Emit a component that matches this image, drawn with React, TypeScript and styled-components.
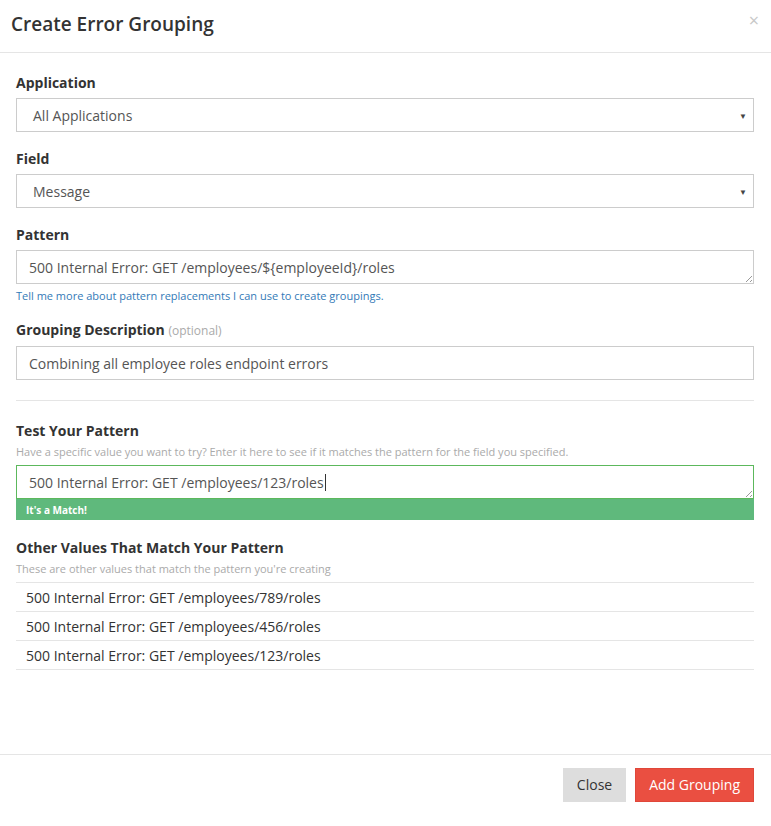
import styled, { createGlobalStyle } from 'styled-components';

const Global = createGlobalStyle`
  html, body { margin: 0; padding: 0; background: #fff; }
  body { font-family: "Open Sans", "Liberation Sans", sans-serif; color: #333; }
  * { box-sizing: border-box; }
`;

const matches = [
  '500 Internal Error: GET /employees/789/roles',
  '500 Internal Error: GET /employees/456/roles',
  '500 Internal Error: GET /employees/123/roles',
];

export default function App() {
  return (
    <>
      <Global />
      <Modal>
        <Header>
          <Title>Create Error Grouping</Title>
          <CloseX>×</CloseX>
        </Header>
        <Body>
          <Group>
            <Label>Application</Label>
            <Select>All Applications<Caret>▼</Caret></Select>
          </Group>
          <Group>
            <Label>Field</Label>
            <Select>Message<Caret>▼</Caret></Select>
          </Group>
          <Group>
            <Label>Pattern</Label>
            <TextBox>500 Internal Error: GET /employees/${'{'}employeeId{'}'}/roles<Grip /></TextBox>
            <HelpLink>Tell me more about pattern replacements I can use to create groupings.</HelpLink>
          </Group>
          <Group>
            <Label>Grouping Description <Optional>(optional)</Optional></Label>
            <Input>Combining all employee roles endpoint errors</Input>
          </Group>
          <Divider />
          <Group $tight>
            <Label>Test Your Pattern</Label>
            <Hint>Have a specific value you want to try? Enter it here to see if it matches the pattern for the field you specified.</Hint>
            <TextBox $success>500 Internal Error: GET /employees/123/roles<Cursor /><Grip /></TextBox>
            <MatchBar>It's a Match!</MatchBar>
          </Group>
          <Group $tight>
            <Label>Other Values That Match Your Pattern</Label>
            <Hint>These are other values that match the pattern you're creating</Hint>
            <List>
              {matches.map((m) => <Row key={m}>{m}</Row>)}
            </List>
          </Group>
        </Body>
        <Footer>
          <Button>Close</Button>
          <Button $primary>Add Grouping</Button>
        </Footer>
      </Modal>
    </>
  );
}

const Modal = styled.div`
  width: 771px;
  height: 826px;
  display: flex;
  flex-direction: column;
`;

const Header = styled.div`
  height: 53px;
  border-bottom: 1px solid #e5e5e5;
  display: flex;
  align-items: center;
  justify-content: space-between;
  padding: 0 12px 4px 11px;
`;

const Title = styled.h1`
  margin: 0;
  font-size: 19px;
  font-weight: 600;
  color: #333;
`;

const CloseX = styled.span`
  font-size: 18px;
  color: #c8c8c8;
  align-self: flex-start;
  margin-top: 8px;
`;

const Body = styled.div`
  flex: 1;
  padding: 20px 17px 0 16px;
`;

const Group = styled.div<{ $tight?: boolean }>`
  margin-bottom: ${({ $tight }) => ($tight ? '18px' : '17px')};
`;

const Label = styled.div`
  font-size: 14px;
  font-weight: 700;
  line-height: 20px;
  margin-bottom: 5px;
`;

const Optional = styled.span`
  font-size: 12px;
  font-weight: 400;
  color: #aaa;
`;

const Select = styled.div`
  position: relative;
  height: 34px;
  border: 1px solid #ccc;
  padding: 0 16px;
  display: flex;
  align-items: center;
  font-size: 14px;
  color: #555;
`;

const Caret = styled.span`
  position: absolute;
  right: 6px;
  font-size: 8px;
  color: #444;
`;

const TextBox = styled.div<{ $success?: boolean }>`
  position: relative;
  height: 34px;
  border: 1px solid ${({ $success }) => ($success ? '#5cb85c' : '#ccc')};
  padding: 0 12px;
  display: flex;
  align-items: center;
  font-size: 14px;
  color: #555;
`;

const Grip = styled.span`
  position: absolute;
  right: 1px;
  bottom: 1px;
  width: 6px;
  height: 6px;
  background: linear-gradient(135deg, transparent 45%, #999 45%, #999 55%, transparent 55%, transparent 75%, #999 75%, #999 85%, transparent 85%);
`;

const Cursor = styled.span`
  display: inline-block;
  width: 1px;
  height: 17px;
  background: #333;
  margin-left: 1px;
`;

const Input = styled.div`
  height: 34px;
  border: 1px solid #ccc;
  padding: 0 12px;
  display: flex;
  align-items: center;
  font-size: 14px;
  color: #555;
`;

const HelpLink = styled.a`
  display: block;
  margin-top: 4px;
  font-size: 11px;
  color: #337ab7;
`;

const Hint = styled.div`
  font-size: 11px;
  color: #aaa;
  margin: -2px 0 6px;
`;

const Divider = styled.hr`
  border: 0;
  border-top: 1px solid #e5e5e5;
  margin: 20px 0 20px;
`;

const MatchBar = styled.div`
  height: 21px;
  background: #5fb97c;
  color: #fff;
  font-size: 10px;
  font-weight: 700;
  padding: 0 10px;
  display: flex;
  align-items: center;
`;

const List = styled.div`
  border-bottom: 1px solid #e5e5e5;
`;

const Row = styled.div`
  height: 29px;
  border-top: 1px solid #e5e5e5;
  padding: 0 10px;
  display: flex;
  align-items: center;
  font-size: 14px;
  color: #333;
`;

const Footer = styled.div`
  height: 72px;
  border-top: 1px solid #e5e5e5;
  display: flex;
  justify-content: flex-end;
  align-items: center;
  gap: 9px;
  padding: 0 17px 12px 0;
`;

const Button = styled.button<{ $primary?: boolean }>`
  height: 34px;
  padding: 0 13px;
  border: 1px solid ${({ $primary }) => ($primary ? '#e0473a' : '#ddd')};
  background: ${({ $primary }) => ($primary ? '#ea4f41' : '#ddd')};
  color: ${({ $primary }) => ($primary ? '#fff' : '#333')};
  font-family: inherit;
  font-size: 14px;
`;
